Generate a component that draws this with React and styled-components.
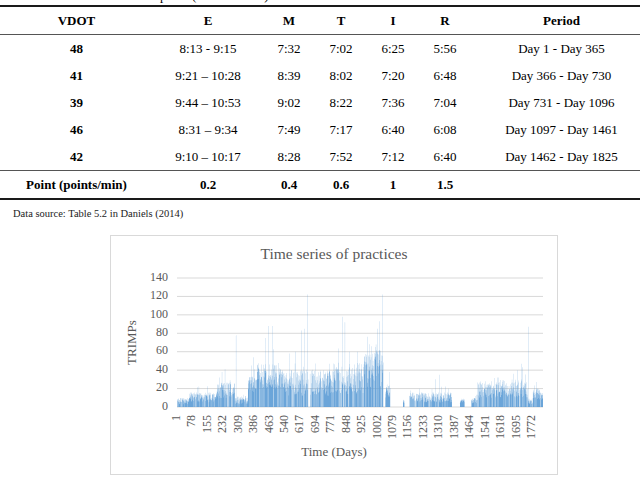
import React from 'react';
import styled, { createGlobalStyle } from 'styled-components';

const serif = '"Liberation Serif", "Times New Roman", serif';

const GlobalStyle = createGlobalStyle`
	html, body {
		margin: 0;
		padding: 0;
		background: #fff;
		overflow: hidden;
	}
	body {
		font-family: ${serif};
		color: #000;
	}
`;

const Page = styled.div`
	width: 652px;
	font-family: ${serif};
`;

const Caption = styled.div`
	margin: -11px 0 3px;
	padding-left: 72px;
	height: 13px;
	font-size: 13px;
	line-height: 13px;
	white-space: nowrap;
`;

const Table = styled.div`
	border-top: 2px solid #1a1a1a;
	border-bottom: 2px solid #1a1a1a;
`;

const Row = styled.div`
	display: grid;
	grid-template-columns: 153px 110px 52px 52px 52px 52px 181px;
	height: 27px;
	align-items: center;
	border-bottom: ${(p) => (p.$rule ? '1px solid #555' : 'none')};
`;

const Cell = styled.div`
	text-align: center;
	font-family: ${serif};
	font-size: 13px;
	font-weight: ${(p) => (p.$bold ? 700 : 400)};
	white-space: nowrap;
`;

const Source = styled.div`
	margin: 7px 0 0 13px;
	font-family: ${serif};
	font-size: 10.5px;
	line-height: 13px;
	color: #222;
`;

const ChartBox = styled.div`
	margin: 15px 0 0 110px;
	width: 446px;
	height: 238px;
	border: 1px solid #d9d9d9;
`;

const ChartTitle = styled.div`
	margin-top: 8px;
	height: 20px;
	line-height: 20px;
	text-align: center;
	font-family: ${serif};
	font-size: 15.5px;
	color: #595959;
`;

const Plot = styled.svg`
	display: block;
	font-family: ${serif};
`;

const AxisTitle = styled.div`
	height: 16px;
	line-height: 16px;
	text-align: center;
	font-family: ${serif};
	font-size: 13px;
	color: #595959;
`;

const rows = [
	['48', '8:13 - 9:15', '7:32', '7:02', '6:25', '5:56', 'Day 1 - Day 365'],
	['41', '9:21 – 10:28', '8:39', '8:02', '7:20', '6:48', 'Day 366 - Day 730'],
	['39', '9:44 – 10:53', '9:02', '8:22', '7:36', '7:04', 'Day 731 - Day 1096'],
	['46', '8:31 – 9:34', '7:49', '7:17', '6:40', '6:08', 'Day 1097 - Day 1461'],
	['42', '9:10 – 10:17', '8:28', '7:52', '7:12', '6:40', 'Day 1462 - Day 1825'],
];

// day ranges: [from, to, low, high]
const SEGS = [
	[1, 60, 3, 10],
	[60, 200, 5, 16],
	[200, 290, 8, 27],
	[290, 355, 3, 12],
	[355, 400, 16, 33],
	[400, 530, 20, 48],
	[530, 655, 12, 40],
	[655, 664, 0, 0],
	[664, 780, 12, 40],
	[780, 930, 14, 48],
	[930, 1030, 20, 62],
	[1030, 1040, 0, 0],
	[1040, 1065, 10, 25],
	[1065, 1128, 0, 0],
	[1128, 1135, 4, 8],
	[1135, 1158, 0, 0],
	[1158, 1372, 5, 16],
	[1372, 1412, 0, 0],
	[1412, 1435, 4, 9],
	[1435, 1468, 0, 0],
	[1468, 1500, 4, 10],
	[1500, 1600, 10, 27],
	[1600, 1750, 10, 30],
	[1750, 1775, 3, 10],
	[1775, 1826, 8, 20],
];

const SPIKES = {
	225: 38, 240: 41, 295: 78, 372: 45, 380: 54, 440: 75, 455: 88, 475: 88,
	560: 58, 590: 60, 620: 83, 635: 85, 650: 122, 760: 47, 825: 98, 838: 92,
	860: 60, 900: 60, 960: 68, 970: 66, 990: 65, 1000: 85, 1010: 93, 1025: 122,
	1058: 38, 1290: 30, 1310: 35, 1540: 28, 1600: 32, 1680: 36, 1700: 40,
	1720: 47, 1752: 87,
};

const rng = (seed) => () => {
	seed = (seed + 0x6d2b79f5) | 0;
	let t = Math.imul(seed ^ (seed >>> 15), 1 | seed);
	t = (t + Math.imul(t ^ (t >>> 7), 61 | t)) ^ t;
	return ((t ^ (t >>> 14)) >>> 0) / 4294967296;
};

const values = (() => {
	const rand = rng(7);
	const out = [];
	for (let d = 1; d <= 1825; d++) {
		const s = SEGS.find((g) => d >= g[0] && d < g[1]);
		let v = 0;
		if (s && s[3] > 0) {
			if (rand() > 0.15) {
				v = s[2] + (s[3] - s[2]) * Math.pow(rand(), 0.9);
				if (rand() < 0.04) v *= 1.5;
			}
		}
		if (SPIKES[d]) v = SPIKES[d];
		out.push(v);
	}
	return out;
})();

const X0 = 66;
const PW = 366;
const Y0 = 143;
const YS = 129 / 140;
const BW = PW / 1825;

const barPath = values
	.map((v, i) => {
		if (v <= 0) return '';
		const x = X0 + i * BW;
		return `M${x.toFixed(2)} ${Y0}V${(Y0 - v * YS).toFixed(2)}h${BW.toFixed(3)}V${Y0}Z`;
	})
	.join('');

const yTicks = [0, 20, 40, 60, 80, 100, 120, 140];
const xTicks = Array.from({ length: 24 }, (_, i) => i * 77 + 1);

const Chart = () => (
	<ChartBox>
		<ChartTitle>Time series of practices</ChartTitle>
		<Plot width="446" height="180">
			{yTicks.map((t) => (
				<g key={t}>
					<line x1={X0} x2={X0 + PW} y1={Y0 - t * YS} y2={Y0 - t * YS} stroke="#d9d9d9" strokeWidth="1" />
					<text x="57" y={Y0 - t * YS} textAnchor="end" dominantBaseline="middle" fontSize="12" fill="#595959">
						{t}
					</text>
				</g>
			))}
			<path d={barPath} fill="#5b9bd5" fillOpacity="0.9" />
			{xTicks.map((d) => {
				const x = X0 + (d - 0.5) * BW;
				return (
					<text
						key={d}
						transform={`translate(${x.toFixed(2)} 151) rotate(-90)`}
						textAnchor="end"
						dominantBaseline="middle"
						fontSize="12"
						fill="#595959"
					>
						{d}
					</text>
				);
			})}
			<text
				transform="translate(22 78.5) rotate(-90)"
				textAnchor="middle"
				dominantBaseline="middle"
				fontSize="13"
				fill="#595959"
			>
				TRIMPs
			</text>
		</Plot>
		<AxisTitle>Time (Days)</AxisTitle>
	</ChartBox>
);

const App = () => (
	<Page>
		<GlobalStyle />
		<Caption>Table 2. Daniels paces (minutes/mile)</Caption>
		<Table>
			<Row $rule>
				{['VDOT', 'E', 'M', 'T', 'I', 'R', 'Period'].map((h) => (
					<Cell key={h} $bold>
						{h}
					</Cell>
				))}
			</Row>
			{rows.map((r, i) => (
				<Row key={r[0]} $rule={i === rows.length - 1}>
					{r.map((c, j) => (
						<Cell key={j} $bold={j === 0}>
							{c}
						</Cell>
					))}
				</Row>
			))}
			<Row>
				{['Point (points/min)', '0.2', '0.4', '0.6', '1', '1.5', ''].map((c, j) => (
					<Cell key={j} $bold>
						{c}
					</Cell>
				))}
			</Row>
		</Table>
		<Source>Data source: Table 5.2 in Daniels (2014)</Source>
		<Chart />
	</Page>
);

export default App;
